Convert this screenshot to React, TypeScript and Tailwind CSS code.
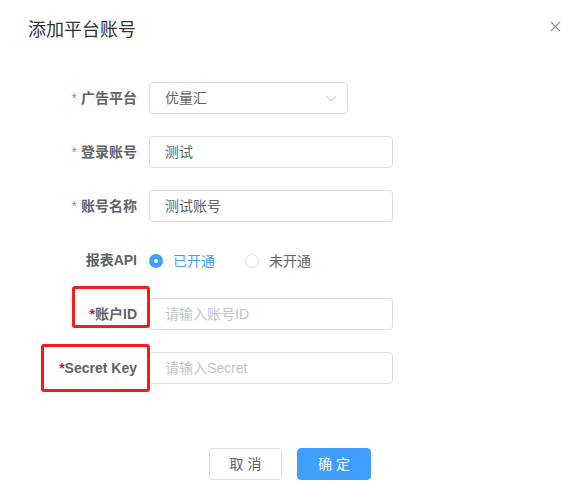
import React from 'react';

const font = 'font-["Liberation_Sans","Noto_Sans_CJK_SC",sans-serif]';

const Label: React.FC<{ text: string; req?: 'soft' | 'hard' }> = ({ text, req }) => (
  <div className="w-[149px] shrink-0 pr-3 text-right text-[14px] font-bold text-[#606266] leading-8">
    {req === 'soft' && <span className="mr-1 font-normal text-[#f56c6c]">*</span>}
    {req === 'hard' && <span className="text-[#f00]">*</span>}
    {text}
  </div>
);

const TextInput: React.FC<{ value?: string; placeholder?: string }> = ({ value, placeholder }) => (
  <div className="w-[244px] h-8 rounded border border-[#dcdfe6] bg-white flex items-center pl-[15px] text-[14px]">
    {value ? (
      <span className="text-[#606266]">{value}</span>
    ) : (
      <span className="text-[#c0c4cc]">{placeholder}</span>
    )}
  </div>
);

export default function App() {
  return (
    <div className={`w-[578px] h-[496px] bg-white relative ${font}`}>
      {/* Header */}
      <div className="flex items-center justify-between pl-[28px] pr-[17px] pt-[18px]">
        <h3 className="text-[18px] leading-6 text-[#303133]">添加平台账号</h3>
        <svg width="11" height="11" viewBox="0 0 11 11" className="-mt-[7px]">
          <path d="M1 1L10 10M10 1L1 10" stroke="#909399" strokeWidth="1.2" fill="none" />
        </svg>
      </div>

      {/* Form */}
      <div className="mt-[40px] flex flex-col gap-[22px]">
        <div className="flex items-center h-8">
          <Label text="广告平台" req="soft" />
          <div className="w-[199px] h-8 rounded border border-[#dcdfe6] bg-white flex items-center justify-between pl-[15px] pr-[10px] text-[14px] text-[#606266]">
            <span>优量汇</span>
            <svg width="12" height="7" viewBox="0 0 12 7">
              <path d="M1 1L6 6L11 1" stroke="#c0c4cc" strokeWidth="1" fill="none" />
            </svg>
          </div>
        </div>

        <div className="flex items-center h-8">
          <Label text="登录账号" req="soft" />
          <TextInput value="测试" />
        </div>

        <div className="flex items-center h-8">
          <Label text="账号名称" req="soft" />
          <TextInput value="测试账号" />
        </div>

        <div className="flex items-center h-8">
          <Label text="报表API" />
          <div className="flex items-center text-[14px] mt-[2px]">
            <span className="w-[14px] h-[14px] rounded-full bg-[#409eff] flex items-center justify-center">
              <span className="w-1 h-1 rounded-full bg-white" />
            </span>
            <span className="ml-[10px] text-[#409eff]">已开通</span>
            <span className="ml-[30px] w-[14px] h-[14px] rounded-full border border-[#dcdfe6] bg-white" />
            <span className="ml-[10px] text-[#606266]">未开通</span>
          </div>
        </div>

        <div className="relative flex items-center h-8">
          <Label text="账户ID" req="hard" />
          <TextInput placeholder="请输入账号ID" />
          <div className="absolute left-[72px] top-[-12px] w-[78px] h-[42px] rounded-[3px] border-[3px] border-[#f71c1c]" />
        </div>

        <div className="relative flex items-center h-8">
          <Label text="Secret Key" req="hard" />
          <TextInput placeholder="请输入Secret" />
          <div className="absolute left-[41px] top-[-8px] w-[109px] h-[48px] rounded-[3px] border-[3px] border-[#f71c1c]" />
        </div>
      </div>

      {/* Footer */}
      <div className="mt-[64px] pl-[2px] flex justify-center gap-[15px]">
        <button className="w-[73px] h-8 rounded border border-[#dcdfe6] bg-white text-[14px] text-[#606266] tracking-[4px] pl-[4px]">
          取消
        </button>
        <button className="w-[74px] h-8 rounded border border-[#409eff] bg-[#409eff] text-[14px] text-white tracking-[4px] pl-[4px]">
          确定
        </button>
      </div>
    </div>
  );
}
